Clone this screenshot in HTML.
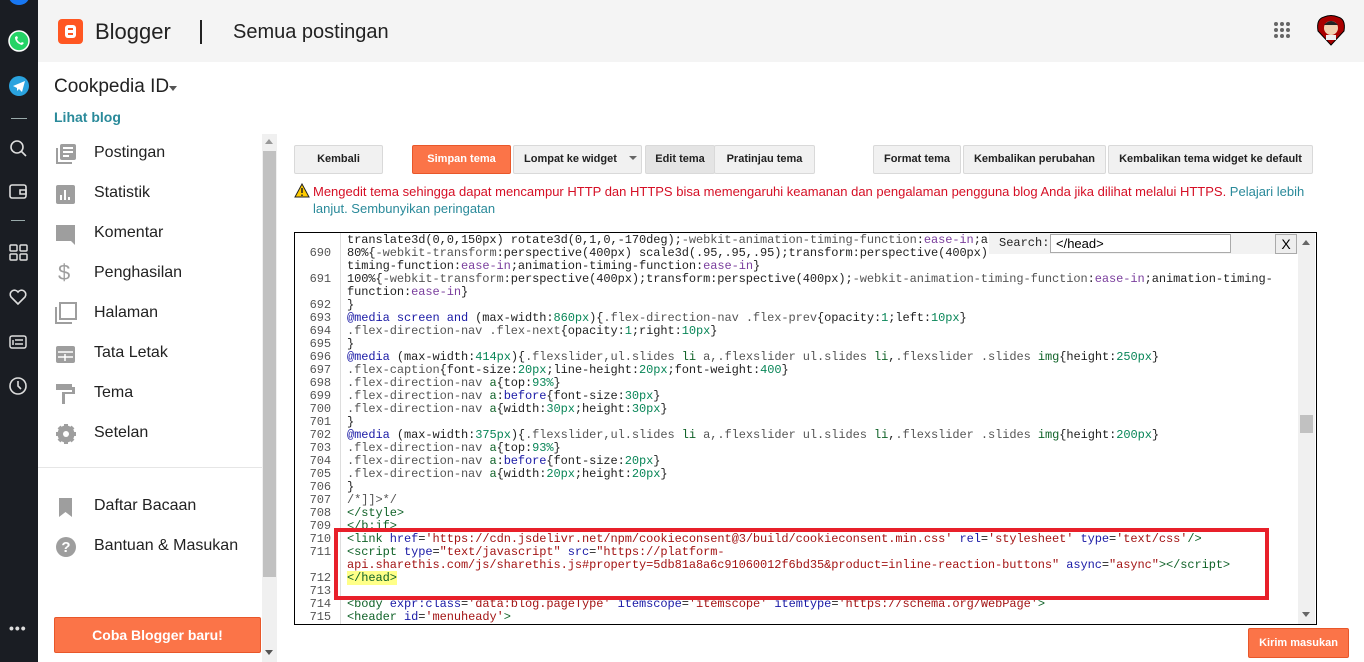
<!DOCTYPE html>
<html><head><meta charset="utf-8">
<style>
*{margin:0;padding:0;box-sizing:border-box}
body{width:1364px;height:662px;overflow:hidden;background:#fff;font-family:"Liberation Sans",Arial,sans-serif;position:relative}
.dark{position:absolute;left:0;top:0;width:38px;height:662px;background:#1a1d23}
.dark svg{position:absolute;left:8px}
.hdr{position:absolute;left:38px;top:0;right:0;height:62px;background:#f4f4f4}
.abs{position:absolute}
.side a{position:absolute;left:94px;font-size:16px;color:#222}
.side svg{position:absolute;left:55px}
.btn{position:absolute;top:145px;height:29px;border:1px solid #d9d9d9;background:#f1f1f1;border-radius:2px;font-size:11px;font-weight:bold;color:#222;text-align:center;line-height:27px}
.code{position:absolute;left:295px;top:233px;width:1020px;height:390px;overflow:hidden;font-family:"Liberation Mono",monospace;font-size:12px;letter-spacing:-0.08px;color:#222}
.r{position:absolute;left:0;height:13px;line-height:13px;white-space:pre}
.n{position:absolute;left:0;width:36px;text-align:right;color:#555}
.t{position:absolute;left:52px}
.k{color:#1a1aa6}.s{color:#a31515}.g{color:#098658}.p{color:#555}.v{color:#7a3e9d}.tg{color:#116329}
</style></head><body>
<div class="dark">
<svg style="top:-8px" width="22" height="14"><ellipse cx="11" cy="5" rx="10" ry="8" fill="#1877f2"/></svg>
<svg style="top:30px" width="22" height="22"><circle cx="11" cy="11" r="10" fill="#25d366" stroke="#fff" stroke-width="1.5"/><path d="M7 7q0 6 7 8l2-2-2-1-1 1q-3-1-4-4l1-1-1-2z" fill="#fff"/></svg>
<svg style="top:75px" width="22" height="22"><circle cx="11" cy="11" r="10" fill="#2aa3df"/><path d="M5 11l12-5-3 11-3-3-2 2v-3z" fill="#fff"/></svg>
<div class="abs" style="left:11px;top:118px;width:16px;height:1px;background:#9aa"></div>
<svg style="top:138px" width="22" height="22" fill="none" stroke="#ddd" stroke-width="1.6"><circle cx="9" cy="9" r="6"/><path d="M13 13l5 5"/></svg>
<svg style="top:181px" width="22" height="22" fill="none" stroke="#ddd" stroke-width="1.6"><rect x="2" y="4" width="16" height="13" rx="2"/><path d="M12 9h6v4h-6z"/></svg>
<div class="abs" style="left:11px;top:220px;width:14px;height:1px;background:#9aa"></div>
<svg style="top:243px" width="22" height="22" fill="none" stroke="#ddd" stroke-width="1.5"><rect x="2" y="2" width="7" height="6" rx="1"/><rect x="12" y="2" width="7" height="6" rx="1"/><rect x="2" y="11" width="7" height="6" rx="1"/><rect x="12" y="11" width="7" height="6" rx="1"/></svg>
<svg style="top:287px" width="22" height="22" fill="none" stroke="#ddd" stroke-width="1.6"><path d="M10 17L3 10a4 4 0 017-5 4 4 0 017 5z"/></svg>
<svg style="top:332px" width="22" height="22" fill="none" stroke="#ddd" stroke-width="1.5"><rect x="2" y="4" width="16" height="12" rx="2"/><path d="M7 8h8M7 12h8M5 8v5"/></svg>
<svg style="top:376px" width="22" height="22" fill="none" stroke="#ddd" stroke-width="1.6"><circle cx="10" cy="10" r="8"/><path d="M10 5v5l3 3"/></svg>
<div class="abs" style="left:9px;top:620px;color:#ddd;font-size:14px;letter-spacing:1px;font-weight:bold">•••</div>
</div>
<div class="hdr">
<div class="abs" style="left:20px;top:19px;width:25px;height:25px;background:#ff5722;border-radius:4px"><div class="abs" style="left:7px;top:6px;width:11px;height:13px;background:#fff;border-radius:3px"><div class="abs" style="left:3px;top:3px;width:5px;height:2px;background:#ff5722"></div><div class="abs" style="left:3px;top:8px;width:5px;height:2px;background:#ff5722"></div></div></div>
<div class="abs" style="left:57px;top:19px;font-size:22px;color:#222">Blogger</div>
<div class="abs" style="left:162px;top:20px;width:2px;height:24px;background:#222"></div>
<div class="abs" style="left:195px;top:21px;font-size:20px;color:#222">Semua postingan</div>
<svg class="abs" style="left:1235px;top:22px" width="20" height="20" fill="#666"><circle cx="3" cy="2" r="2"/><circle cx="9" cy="2" r="2"/><circle cx="15" cy="2" r="2"/><circle cx="3" cy="8" r="2"/><circle cx="9" cy="8" r="2"/><circle cx="15" cy="8" r="2"/><circle cx="3" cy="14" r="2"/><circle cx="9" cy="14" r="2"/><circle cx="15" cy="14" r="2"/></svg>
<svg class="abs" style="left:1276px;top:13px" width="34" height="34"><path d="M17 32L4 18Q2 6 10 4Q17 1 24 4Q32 6 30 18z" fill="#a00" stroke="#000"/><circle cx="17" cy="15" r="7" fill="#f2d0b0"/><path d="M10 12q7-8 14 0" fill="#222"/><rect x="12" y="22" width="10" height="5" fill="#eee"/></svg>
</div>
<div class="abs" style="left:54px;top:76px;font-size:19px;color:#222">Cookpedia ID</div>
<div class="abs" style="left:169px;top:86px;border:4px solid transparent;border-top:5px solid #555;margin-left:0"></div>
<div class="abs" style="left:54px;top:109px;font-size:14px;font-weight:bold;color:#2a8a9a">Lihat blog</div>
<div class="side">
<svg style="top:143px" width="22" height="22" fill="#9e9e9e"><path d="M1 5h2v14h14v2H1z"/><rect x="5" y="1" width="16" height="16" rx="2"/><path d="M8 5h10M8 9h10M8 13h6" stroke="#fff" stroke-width="2"/></svg><a style="top:144px">Postingan</a>
<svg style="top:184px" width="22" height="22" fill="#9e9e9e"><rect x="1" y="1" width="19" height="19" rx="2"/><path d="M6 16v-5M10 16V6M14 16v-3" stroke="#fff" stroke-width="2"/></svg><a style="top:184px">Statistik</a>
<svg style="top:224px" width="22" height="22" fill="#9e9e9e"><path d="M1 1h19v20l-4-4H1z"/></svg><a style="top:224px">Komentar</a>
<span class="abs" style="left:58px;top:260px;font-size:22px;color:#9e9e9e">$</span><a style="top:264px">Penghasilan</a>
<svg style="top:302px" width="22" height="22" fill="none" stroke="#9e9e9e" stroke-width="2"><path d="M1 5v16h16"/><rect x="5" y="1" width="16" height="16"/></svg><a style="top:304px">Halaman</a>
<svg style="top:344px" width="22" height="22" fill="#9e9e9e"><rect x="1" y="2" width="19" height="17" rx="2"/><path d="M3 8h15M10 10v7M3 13h15" stroke="#fff" stroke-width="1.5"/></svg><a style="top:344px">Tata Letak</a>
<svg style="top:383px" width="22" height="24" fill="#9e9e9e"><rect x="1" y="1" width="16" height="6"/><path d="M17 4h3v7H10v10H7V9h10z"/></svg><a style="top:384px">Tema</a>
<svg style="top:423px" width="22" height="22"><circle cx="11" cy="11" r="6" fill="none" stroke="#9e9e9e" stroke-width="5"/><path d="M11 1v20M1 11h20M4 4l14 14M18 4L4 18" stroke="#9e9e9e" stroke-width="4"/><circle cx="11" cy="11" r="3" fill="#fff"/></svg><a style="top:424px">Setelan</a>
<svg style="top:497px" width="22" height="22" fill="#9e9e9e"><path d="M4 1h13v19l-6.5-5L4 20z"/></svg><a style="top:497px">Daftar Bacaan</a>
<svg style="top:536px" width="22" height="22"><circle cx="11" cy="11" r="10" fill="#9e9e9e"/><text x="11" y="16" font-size="15" font-weight="bold" fill="#fff" text-anchor="middle" font-family="Liberation Sans">?</text></svg><a style="top:537px">Bantuan &amp; Masukan</a>
</div>
<div class="abs" style="left:38px;top:467px;width:224px;height:1px;background:#e6e6e6"></div>
<div class="abs" style="left:54px;top:617px;width:207px;height:36px;background:#fb7448;border:1px solid #e8572a;border-radius:2px;color:#fff;font-weight:bold;font-size:14px;text-align:center;line-height:34px">Coba Blogger baru!</div>
<div class="abs" style="left:262px;top:134px;width:15px;height:528px;background:#f0f0f0"></div>
<div class="abs" style="left:263px;top:151px;width:13px;height:426px;background:#c1c1c1"></div>
<div class="abs" style="left:265px;top:139px;border:4px solid transparent;border-bottom:5px solid #999;border-top:0"></div>
<div class="abs" style="left:265px;top:650px;border:4px solid transparent;border-top:5px solid #555;border-bottom:0"></div>

<div class="btn" style="left:294px;width:89px">Kembali</div>
<div class="btn" style="left:412px;width:99px;background:#fb7448;border-color:#e8572a;color:#fff">Simpan tema</div>
<div class="btn" style="left:513px;width:129px;text-align:left;padding-left:10px">Lompat ke widget <span style="display:inline-block;margin-left:9px;border:4px solid transparent;border-top:4px solid #666;vertical-align:-2px"></span></div>
<div class="btn" style="left:645px;width:70px;background:#e4e4e4">Edit tema</div>
<div class="btn" style="left:714px;width:101px">Pratinjau tema</div>
<div class="btn" style="left:873px;width:88px">Format tema</div>
<div class="btn" style="left:963px;width:143px">Kembalikan perubahan</div>
<div class="btn" style="left:1108px;width:205px">Kembalikan tema widget ke default</div>
<svg class="abs" style="left:294px;top:183px" width="16" height="15"><path d="M8 1L15 14H1z" fill="#fc0" stroke="#222"/><path d="M8 5v5M8 11.5v1.5" stroke="#222" stroke-width="1.5"/></svg>
<div class="abs" style="left:313px;top:183px;width:1000px;font-size:13px;line-height:17px;color:#d50f25">Mengedit tema sehingga dapat mencampur HTTP dan HTTPS bisa memengaruhi keamanan dan pengalaman pengguna blog Anda jika dilihat melalui HTTPS. <span style="color:#2a8a9a">Pelajari lebih</span></div>
<div class="abs" style="left:313px;top:200px;font-size:13px;line-height:17px;color:#2a8a9a">lanjut. Sembunyikan peringatan</div>

<div class="abs" style="left:294px;top:232px;width:1023px;height:393px;border:1px solid #000"></div>
<div class="abs" style="left:340px;top:233px;width:1px;height:391px;background:#ddd"></div>
<div class="code">
<div class="r" style="top:1px"><span class="t">translate3d(0,0,150px) rotate3d(0,1,0,-170deg);<span class="p">-webkit-animation-timing-function</span>:<span class="v">ease-in</span>;a</span></div>
<div class="r" style="top:14px"><span class="n">690</span><span class="t">80%{<span class="p">-webkit-transform</span>:perspective(400px) scale3d(.95,.95,.95);transform:perspective(400px)</span></div>
<div class="r" style="top:27px"><span class="t">timing-function:<span class="v">ease-in</span>;animation-timing-function:<span class="v">ease-in</span>}</span></div>
<div class="r" style="top:40px"><span class="n">691</span><span class="t">100%{<span class="p">-webkit-transform</span>:perspective(400px);transform:perspective(400px);<span class="p">-webkit-animation-timing-function</span>:<span class="v">ease-in</span>;animation-timing-</span></div>
<div class="r" style="top:53px"><span class="t">function:<span class="v">ease-in</span>}</span></div>
<div class="r" style="top:66px"><span class="n">692</span><span class="t">}</span></div>
<div class="r" style="top:79px"><span class="n">693</span><span class="t"><span class="k">@media screen and</span> (max-width:<span class="g">860px</span>){<span class="p">.flex-direction-nav .flex-prev</span>{opacity:<span class="g">1</span>;left:<span class="g">10px</span>}</span></div>
<div class="r" style="top:92px"><span class="n">694</span><span class="t"><span class="p">.flex-direction-nav .flex-next</span>{opacity:<span class="g">1</span>;right:<span class="g">10px</span>}</span></div>
<div class="r" style="top:105px"><span class="n">695</span><span class="t">}</span></div>
<div class="r" style="top:118px"><span class="n">696</span><span class="t"><span class="k">@media</span> (max-width:<span class="g">414px</span>){<span class="p">.flexslider,ul.slides</span> <span class="tg">li</span> <span class="p">a,.flexslider ul.slides</span> <span class="tg">li</span>,<span class="p">.flexslider .slides</span> <span class="tg">img</span>{height:<span class="g">250px</span>}</span></div>
<div class="r" style="top:131px"><span class="n">697</span><span class="t"><span class="p">.flex-caption</span>{font-size:<span class="g">20px</span>;line-height:<span class="g">20px</span>;font-weight:<span class="g">400</span>}</span></div>
<div class="r" style="top:144px"><span class="n">698</span><span class="t"><span class="p">.flex-direction-nav</span> <span class="tg">a</span>{top:<span class="g">93%</span>}</span></div>
<div class="r" style="top:157px"><span class="n">699</span><span class="t"><span class="p">.flex-direction-nav</span> <span class="tg">a</span>:<span class="k">before</span>{font-size:<span class="g">30px</span>}</span></div>
<div class="r" style="top:170px"><span class="n">700</span><span class="t"><span class="p">.flex-direction-nav</span> <span class="tg">a</span>{width:<span class="g">30px</span>;height:<span class="g">30px</span>}</span></div>
<div class="r" style="top:183px"><span class="n">701</span><span class="t">}</span></div>
<div class="r" style="top:196px"><span class="n">702</span><span class="t"><span class="k">@media</span> (max-width:<span class="g">375px</span>){<span class="p">.flexslider,ul.slides</span> <span class="tg">li</span> <span class="p">a,.flexslider ul.slides</span> <span class="tg">li</span>,<span class="p">.flexslider .slides</span> <span class="tg">img</span>{height:<span class="g">200px</span>}</span></div>
<div class="r" style="top:209px"><span class="n">703</span><span class="t"><span class="p">.flex-direction-nav</span> <span class="tg">a</span>{top:<span class="g">93%</span>}</span></div>
<div class="r" style="top:222px"><span class="n">704</span><span class="t"><span class="p">.flex-direction-nav</span> <span class="tg">a</span>:<span class="k">before</span>{font-size:<span class="g">20px</span>}</span></div>
<div class="r" style="top:235px"><span class="n">705</span><span class="t"><span class="p">.flex-direction-nav</span> <span class="tg">a</span>{width:<span class="g">20px</span>;height:<span class="g">20px</span>}</span></div>
<div class="r" style="top:248px"><span class="n">706</span><span class="t">}</span></div>
<div class="r" style="top:261px"><span class="n">707</span><span class="t"><span class="p">/*]]&gt;*/</span></span></div>
<div class="r" style="top:274px"><span class="n">708</span><span class="t"><span class="tg">&lt;/style&gt;</span></span></div>
<div class="r" style="top:287px"><span class="n">709</span><span class="t"><span class="tg">&lt;/b:if&gt;</span></span></div>
<div class="r" style="top:300px"><span class="n">710</span><span class="t"><span class="tg">&lt;link</span> <span class="k">href</span>=<span class="s">'https://cdn.jsdelivr.net/npm/cookieconsent@3/build/cookieconsent.min.css'</span> <span class="k">rel</span>=<span class="s">'stylesheet'</span> <span class="k">type</span>=<span class="s">'text/css'</span><span class="tg">/&gt;</span></span></div>
<div class="r" style="top:313px"><span class="n">711</span><span class="t"><span class="tg">&lt;script</span> <span class="k">type</span>=<span class="s">"text/javascript"</span> <span class="k">src</span>=<span class="s">"https://platform-</span></span></div>
<div class="r" style="top:326px"><span class="t"><span class="s">api.sharethis.com/js/sharethis.js#property=5db81a8a6c91060012f6bd35&amp;product=inline-reaction-buttons"</span> <span class="k">async</span>=<span class="s">"async"</span><span class="tg">&gt;&lt;/script&gt;</span></span></div>
<div class="r" style="top:339px"><span class="n">712</span><span class="t"><span class="tg" style="background:#ffff88">&lt;/head&gt;</span></span></div>
<div class="r" style="top:352px"><span class="n">713</span></div>
<div class="r" style="top:365px"><span class="n">714</span><span class="t"><span class="tg">&lt;body</span> <span class="k">expr:class</span>=<span class="s">'data:blog.pageType'</span> <span class="k">itemscope</span>=<span class="s">'itemscope'</span> <span class="k">itemtype</span>=<span class="s">'https://schema.org/WebPage'</span><span class="tg">&gt;</span></span></div>
<div class="r" style="top:378px"><span class="n">715</span><span class="t"><span class="tg">&lt;header</span> <span class="k">id</span>=<span class="s">'menuheady'</span><span class="tg">&gt;</span></span></div>
</div>
<div class="abs" style="left:334px;top:528px;width:935px;height:72px;border:4px solid #e8202a"></div>
<div class="abs" style="left:989px;top:233px;width:309px;height:21px;background:#f2f2f2"></div>
<div class="abs" style="left:999px;top:236px;font-family:'Liberation Mono',monospace;font-size:12px;color:#222">Search:</div>
<div class="abs" style="left:1050px;top:234px;width:181px;height:19px;background:#fff;border:1px solid #aaa;font-size:13px;padding-left:5px;line-height:17px">&lt;/head&gt;</div>
<div class="abs" style="left:1275px;top:234px;width:22px;height:20px;background:#eee;border:1px solid #aaa;font-size:14px;text-align:center;line-height:18px">X</div>
<div class="abs" style="left:1298px;top:233px;width:17px;height:391px;background:#f0f0f0"></div>
<div class="abs" style="left:1300px;top:415px;width:13px;height:18px;background:#c1c1c1"></div>
<div class="abs" style="left:1302px;top:240px;border:4px solid transparent;border-bottom:5px solid #666;border-top:0"></div>
<div class="abs" style="left:1302px;top:612px;border:4px solid transparent;border-top:5px solid #666;border-bottom:0"></div>
<div class="abs" style="left:1248px;top:628px;width:101px;height:30px;background:#fb7448;border:1px solid #e8572a;border-radius:2px;color:#fff;font-weight:bold;font-size:11px;text-align:center;line-height:28px">Kirim masukan</div>
</body></html>
